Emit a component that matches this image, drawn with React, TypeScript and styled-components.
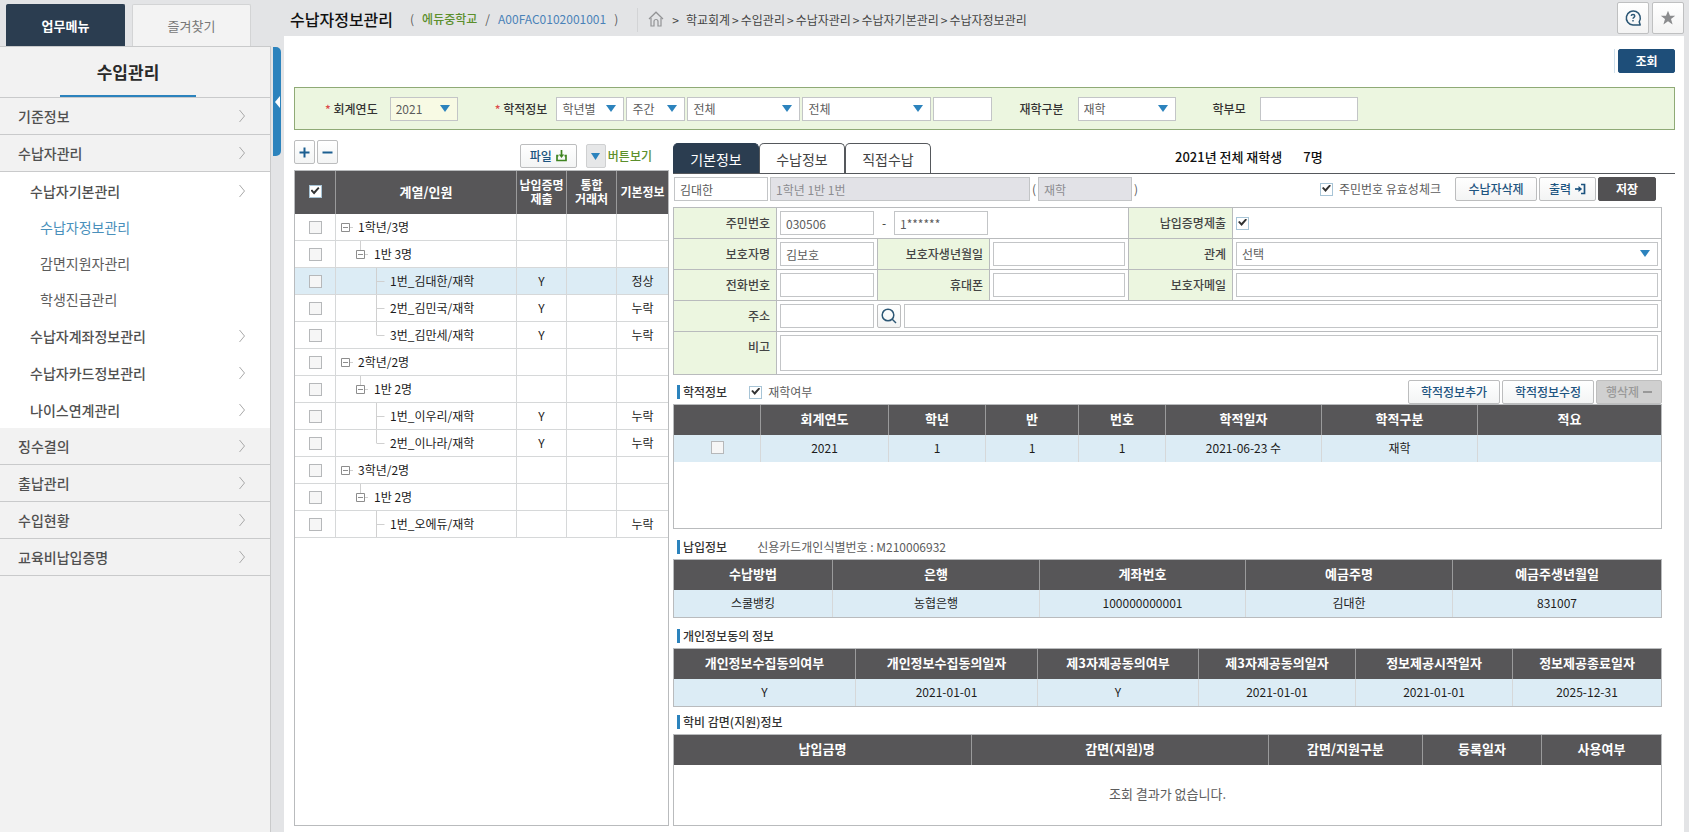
import React, { useState } from "react";
import styled, { createGlobalStyle, css } from "styled-components";

const color = {
  page: "#e3e4e6",
  navy: "#2b3d50",
  blue: "#2c83bd",
  link: "#1d5480",
  line: "#b9bbbd",
  cell: "#d6d8d9",
  head: "#575658",
  mint: "#ecf6e0",
  select: "#dcecf5",
  text: "#333333",
  soft: "#5c5c5c",
};

const GlobalStyle = createGlobalStyle`
  *, *::before, *::after { box-sizing: border-box; }
  body { margin: 0; background: ${color.page}; }
  body, button, input, select, textarea {
    font-family: "Noto Sans CJK KR", "Noto Sans", sans-serif;
    font-size: 12px;
    line-height: 16px;
    color: ${color.text};
  }
  button { cursor: pointer; }
  a { text-decoration: none; color: inherit; }
  ul, h1, h2 { margin: 0; padding: 0; list-style: none; }
`;

/* ---------- page frame ---------- */

const Page = styled.div`
  display: flex;
  min-height: 100vh;
`;

const Sidebar = styled.aside`
  width: 271px;
  flex: none;
  display: flex;
  flex-direction: column;
`;

const SideTabs = styled.div`
  display: flex;
  align-items: flex-end;
  gap: 7px;
  height: 46px;
  padding-left: 6px;
`;

const SideTab = styled.button<{ $active?: boolean }>`
  width: 119px;
  height: 42px;
  padding: 0;
  border: 1px solid ${(p) => (p.$active ? color.navy : "#d3d4d5")};
  border-bottom: 0;
  border-radius: 2px 2px 0 0;
  background: ${(p) => (p.$active ? color.navy : "#f3f3f3")};
  color: ${(p) => (p.$active ? "#fff" : "#777")};
  font-size: 13px;
  font-weight: ${(p) => (p.$active ? 700 : 400)};
`;

const SidePanel = styled.nav`
  flex: 1;
  background: #f2f2f2;
  border: 1px solid #c9cacb;
  border-width: 1px 1px 0 0;
`;

const SideTitle = styled.h2`
  display: flex;
  justify-content: center;
  height: 51px;
  border-bottom: 1px solid #c9cacb;
  font-size: 17px;
  font-weight: 700;
  line-height: 49px;
  color: #2a2a2a;

  span {
    width: 136px;
    margin-left: -14px;
    text-align: center;
    border-bottom: 2px solid ${color.blue};
  }
`;

const MenuItem = styled.a<{ $level: number; $current?: boolean }>`
  display: flex;
  align-items: center;
  justify-content: space-between;
  height: 37px;
  padding: 0 24px 0 18px;
  border-bottom: 1px solid #c9cacb;
  font-size: 14px;
  font-weight: 500;
  color: #505050;

  ${(p) =>
    p.$level === 2 &&
    css`
      padding-left: 30px;
      border-bottom: 0;
    `}
  ${(p) =>
    p.$level === 3 &&
    css`
      height: 36px;
      padding-left: 40px;
      border-bottom: 0;
      font-weight: 400;
      color: ${p.$current ? "#4a90bb" : color.soft};
    `}
`;

const SubMenu = styled.ul`
  background: #fff;
`;

const Rail = styled.div`
  flex: none;
  width: 13px;
  padding: 47px 3px 0 2px;
`;

const CollapseButton = styled.button`
  display: flex;
  align-items: center;
  justify-content: center;
  width: 8px;
  height: 109px;
  padding: 0;
  border: 0;
  border-radius: 0 5px 5px 0;
  background: ${color.blue};
`;

const Main = styled.main`
  flex: 1;
  min-width: 0;
  display: flex;
  flex-direction: column;
  margin-right: 5px;
`;

const Header = styled.header`
  display: flex;
  align-items: flex-start;
  height: 36px;
  padding: 2px 0 0 6px;
`;

const PageTitle = styled.h1`
  font-size: 16px;
  line-height: 34px;
  font-weight: 500;
  color: #111;
`;

const SchoolInfo = styled.div`
  display: flex;
  gap: 8px;
  margin: 0 19px 0 17px;
  line-height: 34px;
  color: ${color.soft};

  b { font-weight: 500; color: #5c8f2c; }
  a { color: #4a82b8; }
`;

const Crumbs = styled.ol`
  display: flex;
  align-items: center;
  height: 24px;
  margin: 6px 0 0;
  padding: 0 0 0 10px;
  list-style: none;
  border-left: 1px solid #d3d4d6;
  color: #444;

  li { display: flex; align-items: center; }
  li + li::before { content: ">"; margin: 0 2px; }
  li:nth-child(2)::before { margin: 0 7px 0 8px; }
`;

const HeaderTools = styled.div`
  display: flex;
  gap: 3px;
  margin-left: auto;
`;

const ToolButton = styled.button`
  display: flex;
  align-items: center;
  justify-content: center;
  width: 32px;
  height: 32px;
  padding: 0;
  border: 1px solid #bfc0c1;
  border-radius: 2px;
  background: linear-gradient(#fff, #f3f3f3);
`;

const Content = styled.div`
  flex: 1;
  display: flex;
  flex-direction: column;
  padding: 13px 9px 6px 10px;
  background: #fff;
`;

/* ---------- controls ---------- */

const Button = styled.button<{ $w: number; $kind?: "primary" | "dark" }>`
  display: inline-flex;
  align-items: center;
  justify-content: center;
  gap: 4px;
  flex: none;
  width: ${(p) => p.$w}px;
  height: 24px;
  padding: 0;
  border: 1px solid #bcbdbe;
  border-radius: 2px;
  background: linear-gradient(#fff, #f3f4f4);
  color: ${color.link};
  font-weight: 500;
  white-space: nowrap;

  ${(p) =>
    p.$kind &&
    css`
      border-color: ${p.$kind === "dark" ? "#525153" : "#1e4e79"};
      background: ${p.$kind === "dark" ? "#525153" : "#1e4e79"};
      color: #fff;
      font-weight: 700;
    `}

  &:disabled {
    border-color: #bfbfbf;
    background: #d0d0d0;
    color: #999;
  }
`;

const MoreButton = styled(Button)`
  border-color: #cfd0d1;
  background: #e6e7e8;
`;

const Field = styled.input<{ $w?: number }>`
  ${(p) => (p.$w ? `flex: none; width: ${p.$w}px;` : "flex: 1; min-width: 0;")}
  height: 24px;
  padding: 0 5px;
  border: 1px solid #c3c5c7;
  border-radius: 0;
  background: #fff;
  color: ${color.soft};

  &:disabled {
    background: #e2e2e7;
    color: #8c8c90;
  }
`;

const Memo = styled.textarea`
  display: block;
  width: 100%;
  height: 36px;
  padding: 4px 5px;
  border: 1px solid #c3c5c7;
  resize: none;
`;

const SelectWrap = styled.span<{ $w?: number; $required?: boolean }>`
  position: relative;
  display: flex;
  ${(p) => (p.$w ? `flex: none; width: ${p.$w}px;` : "flex: 1;")}

  &::after {
    content: "";
    position: absolute;
    top: 8px;
    right: 8px;
    border: 5px solid transparent;
    border-top: 7px solid ${color.blue};
    border-bottom: 0;
    pointer-events: none;
  }

  select {
    appearance: none;
    width: 100%;
    height: 24px;
    padding: 0 20px 0 5px;
    border: 1px solid #c3c5c7;
    border-radius: 0;
    background: ${(p) => (p.$required ? "#f8fae4" : "#fff")};
    color: ${color.soft};
  }
`;

const Check = styled.input.attrs({ type: "checkbox" })`
  appearance: none;
  display: block;
  flex: none;
  width: 13px;
  height: 13px;
  margin: 0;
  border: 1px solid #b6b8ba;
  background: #f6f6f6;

  &:checked {
    border-color: #a7c4d6;
    background: #fff;
  }
  &:checked::after {
    content: "";
    display: block;
    width: 9px;
    height: 8px;
    margin: 1px;
    background: #333;
    clip-path: polygon(0 45%, 18% 30%, 38% 55%, 85% 0, 100% 15%, 40% 95%);
  }
`;

const CheckLabel = styled.label`
  display: inline-flex;
  align-items: center;
  gap: 6px;
  color: ${color.soft};
`;

function Select(props: { label?: string; id?: string; value: string; w?: number; required?: boolean }) {
  return (
    <SelectWrap $w={props.w} $required={props.required}>
      <select id={props.id} aria-label={props.label} defaultValue={props.value}>
        <option>{props.value}</option>
      </select>
    </SelectWrap>
  );
}

/* ---------- search ---------- */

const Actions = styled.div`
  display: flex;
  justify-content: flex-end;
  margin-bottom: 14px;
`;

const ActionGroup = styled.div`
  padding-left: 3px;
  border-left: 1px solid #cfe0ec;
`;

const SearchBar = styled.form`
  display: flex;
  align-items: center;
  height: 43px;
  padding: 1px 0 0 30px;
  border: 1px solid #8faa76;
  background: ${color.mint};
`;

const SearchGroup = styled.div<{ $gap: number; $after: number }>`
  display: flex;
  align-items: center;
  gap: 2px;
  margin-right: ${(p) => p.$after}px;

  label {
    margin-right: ${(p) => p.$gap}px;
    font-weight: 500;
    white-space: nowrap;
  }
  label i { color: #dd4b4b; font-style: normal; }
`;

/* ---------- panels ---------- */

const Columns = styled.div`
  flex: 1;
  display: flex;
  gap: 4px;
  margin-top: 10px;
`;

const TreePanel = styled.section`
  flex: none;
  width: 375px;
  display: flex;
  flex-direction: column;
`;

const TreeTools = styled.div`
  display: flex;
  align-items: flex-start;
  gap: 2px;
  height: 30px;
`;

const TreeActions = styled.div`
  display: flex;
  align-items: center;
  gap: 2px;
  margin: 4px 17px 0 auto;

  button:first-child { margin-right: 7px; }
  label { color: #5c8f2c; font-weight: 500; }
`;

const GridBox = styled.div<{ $minHeight?: number; $grow?: boolean }>`
  ${(p) => p.$grow && "flex: 1;"}
  min-height: ${(p) => p.$minHeight ?? 0}px;
  border: 1px solid ${color.line};
`;

const Grid = styled.table<{ $tree?: boolean }>`
  width: 100%;
  table-layout: fixed;
  border-collapse: separate;
  border-spacing: 0;
  text-align: center;
  color: #1c1c1c;

  th {
    height: ${(p) => (p.$tree ? 43 : 30)}px;
    padding: 0 0 2px;
    border-right: 1px solid #9a9a9b;
    background: ${color.head};
    color: #fff;
    font-size: 13px;
    font-weight: 700;
  }
  td {
    height: 27px;
    padding: 0 0 ${(p) => (p.$tree ? 0 : 2)}px;
    border-right: 1px solid ${color.cell};
    border-bottom: ${(p) => (p.$tree ? `1px solid ${color.cell}` : "0")};
  }
  th:last-child, td:last-child { border-right: 0; }
  th input, td input { margin: 0 auto; }
`;

const Row = styled.tr<{ $selected?: boolean }>`
  background: ${(p) => (p.$selected ? color.select : "#fff")};
`;

const EmptyRow = styled.tr`
  && td {
    height: 60px;
    border: 0;
    color: ${color.soft};
    font-size: 13px;
  }
`;

const SmallHead = styled.span`
  display: block;
  font-size: 12px;
  line-height: 14px;
`;

const Node = styled.div`
  display: flex;
  align-items: center;
  height: 26px;
  padding-left: 4px;
  white-space: nowrap;
`;

const Detail = styled.section`
  flex: 1;
  min-width: 0;
  padding-top: 3px;
`;

const TabRow = styled.div`
  display: flex;
  height: 31px;
  border-bottom: 1px solid #55585c;
`;

const Tab = styled.button<{ $active?: boolean }>`
  width: 86px;
  padding: 0;
  border: 1px solid ${(p) => (p.$active ? color.navy : "#55585c")};
  border-bottom: 0;
  border-radius: 5px 5px 0 0;
  background: ${(p) => (p.$active ? color.navy : "#fff")};
  color: ${(p) => (p.$active ? "#fff" : "#444")};
  font-size: 14px;
`;

const Summary = styled.p`
  display: flex;
  gap: 21px;
  margin: 0;
  padding: 6px 0 0 244px;
  font-size: 13px;
  font-weight: 500;
  color: #111;
`;

const Body = styled.div`
  padding-right: 13px;
`;

const StudentBar = styled.div`
  display: flex;
  align-items: center;
  gap: 2px;
  padding: 3px 6px 6px 1px;
  color: ${color.soft};
`;

const StudentActions = styled.div`
  display: flex;
  align-items: center;
  gap: 2px;
  margin-left: auto;

  label { margin-right: 12px; }
`;

const FormGrid = styled.div`
  display: grid;
  grid-template-columns: 103px 101px 112px 139px 104px 1fr;
  border: 1px solid ${color.line};
  border-bottom: 0;
`;

const FormLabel = styled.label`
  padding: 7px 6px 0 0;
  border: 1px solid ${color.line};
  border-width: 0 1px 1px 0;
  background: ${color.mint};
  text-align: right;
  font-weight: 500;
  color: #444;
`;

const FormCell = styled.div<{ $span?: number; $last?: boolean }>`
  grid-column: span ${(p) => p.$span ?? 1};
  display: flex;
  align-items: center;
  gap: 3px;
  padding: 3px;
  min-height: 31px;
  border-bottom: 1px solid ${color.line};
  border-right: ${(p) => (p.$last ? "0" : `1px solid ${color.line}`)};
`;

const Dash = styled.span`
  width: 14px;
  text-align: center;
`;

const SectionHead = styled.div<{ $top?: number }>`
  display: flex;
  align-items: center;
  height: 24px;
  margin-top: ${(p) => p.$top ?? 6}px;
  padding-left: 4px;

  h2 {
    padding-left: 3px;
    border-left: 3px solid ${color.blue};
    font-size: 12px;
    line-height: 14px;
    font-weight: 500;
  }
  h2 + * { margin-left: 22px; }
`;

const CardNumber = styled.span`
  padding-left: 8px;
  color: ${color.soft};
`;

const SectionActions = styled.div`
  display: flex;
  gap: 2px;
  && { margin-left: auto; }
`;

/* ---------- icons ---------- */

const Chevron = () => (
  <svg width="8" height="14" viewBox="0 0 8 14" fill="none" stroke="#a9a9a9" aria-hidden>
    <path d="M1.5 1 6.5 7 1.5 13" />
  </svg>
);

const HomeIcon = () => (
  <svg width="16" height="16" viewBox="0 0 16 16" fill="none" stroke="#929395" strokeWidth="1.2" aria-hidden>
    <path d="M1 8 8 1.2 15 8" />
    <path d="M3 7v8h3v-4.5a2 2 0 0 1 4 0V15h3V7" />
  </svg>
);

const HelpIcon = () => (
  <svg width="18" height="18" viewBox="0 0 18 18" fill="none" stroke="#2c5775" strokeWidth="1.5" aria-hidden>
    <path d="M15.200 12.800A7 7 0 1 0 9 16h7.200Z" strokeLinejoin="round" />
    <path d="M7.200 6.900C7.300 5 10.800 5 10.800 7c0 1.300-1.800 1.400-1.800 2.800M9 11v1.400" strokeWidth="1.400" />
  </svg>
);

const StarIcon = () => (
  <svg width="16" height="16" viewBox="0 0 16 16" fill="#8b8c8e" aria-hidden>
    <path d="m8 .8 2 5h5.200l-4.200 3.300 1.600 5.400L8 11.300l-4.600 3.200L5 9.100.8 5.800H6Z" />
  </svg>
);

const DownloadIcon = () => (
  <svg width="11" height="12" viewBox="0 0 11 12" fill="none" stroke="#3f8420" strokeWidth="1.7" aria-hidden>
    <path d="M2.500 5.700H1v4.800h9V5.700H8.500" />
    <path d="M5.500 0v5" />
    <path d="M2.800 4.500h5.400L5.500 8Z" fill="#3f8420" stroke="none" />
  </svg>
);

const ExportIcon = () => (
  <svg width="11" height="12" viewBox="0 0 11 12" fill="none" stroke={color.link} strokeWidth="1.7" aria-hidden>
    <path d="M6 1.500h3.500v9H6" />
    <path d="M0 6h4" />
    <path d="M3.500 3 7.200 6 3.500 9Z" fill={color.link} stroke="none" />
  </svg>
);

const SearchIcon = () => (
  <svg width="16" height="16" viewBox="0 0 16 16" fill="none" stroke="#2c5775" strokeWidth="1.500" aria-hidden>
    <circle cx="7" cy="7" r="5.800" />
    <path d="m11 11 4 4" />
  </svg>
);

const Sign = ({ plus }: { plus?: boolean }) => (
  <svg width="11" height="11" viewBox="0 0 11 11" stroke="#1c5f91" strokeWidth="2" aria-hidden>
    <path d={plus ? "M0.500 5.500h10M5.500 0.500v10" : "M0.500 5.500h10"} />
  </svg>
);

const Caret = () => (
  <svg width="9" height="7" viewBox="0 0 9 7" fill={color.blue} aria-hidden>
    <path d="M0 0h9L4.500 7Z" />
  </svg>
);

const BackArrow = () => (
  <svg width="5" height="12" viewBox="0 0 5 12" fill="#fff" aria-hidden>
    <path d="M5 0v12L0 6Z" />
  </svg>
);

/* Connector lines and the collapse box in front of a tree label. */
function Branch({ level, last }: { level: number; last?: boolean }) {
  const width = 2 + level * 16;
  const x = (level - 1) * 15 + 1;
  return (
    <svg width={width} height="26" viewBox={`0 0 ${width} 26`} fill="none" stroke="#d0d0d0" aria-hidden>
      {level === 2 && <path d={`M${x + 4}.5 0v9`} />}
      {level < 3 && <path d={`M${x + 9} 13.500h3`} />}
      {level < 3 && <path d={`M${x}.5 9.500h8v8h-8ZM${x + 2} 13.500h5`} stroke="#8d8d8d" />}
      {level === 3 && <path d={`M36.500 0v${last ? 13 : 26}M36.500 13.500h8`} />}
    </svg>
  );
}

/* ---------- data ---------- */

type Menu = { name: string; level: number; current?: boolean };

const topMenu: Menu[] = [
  { name: "기준정보", level: 1 },
  { name: "수납자관리", level: 1 },
];
const subMenu: Menu[] = [
  { name: "수납자기본관리", level: 2 },
  { name: "수납자정보관리", level: 3, current: true },
  { name: "감면지원자관리", level: 3 },
  { name: "학생진급관리", level: 3 },
  { name: "수납자계좌정보관리", level: 2 },
  { name: "수납자카드정보관리", level: 2 },
  { name: "나이스연계관리", level: 2 },
];
const restMenu: Menu[] = ["징수결의", "출납관리", "수입현황", "교육비납입증명"].map((name) => ({ name, level: 1 }));

const crumbs = ["학교회계", "수입관리", "수납자관리", "수납자기본관리", "수납자정보관리"];

const tree = [
  { level: 1, name: "1학년/3명" },
  { level: 2, name: "1반 3명" },
  { level: 3, name: "1번_김대한/재학", proof: "Y", info: "정상", selected: true },
  { level: 3, name: "2번_김민국/재학", proof: "Y", info: "누락" },
  { level: 3, name: "3번_김만세/재학", proof: "Y", info: "누락", last: true },
  { level: 1, name: "2학년/2명" },
  { level: 2, name: "1반 2명" },
  { level: 3, name: "1번_이우리/재학", proof: "Y", info: "누락" },
  { level: 3, name: "2번_이나라/재학", proof: "Y", info: "누락", last: true },
  { level: 1, name: "3학년/2명" },
  { level: 2, name: "1반 2명" },
  { level: 3, name: "1번_오에듀/재학", proof: "", info: "누락" },
];

/* ---------- pieces ---------- */

function MenuLinks({ items }: { items: Menu[] }) {
  return (
    <>
      {items.map((m) => (
        <li key={m.name}>
          <MenuItem href="#" $level={m.level} $current={m.current}>
            {m.name}
            {m.level < 3 && <Chevron />}
          </MenuItem>
        </li>
      ))}
    </>
  );
}

function DataGrid(props: {
  columns: [React.ReactNode, number][];
  row?: React.ReactNode[];
  minHeight?: number;
}) {
  return (
    <GridBox $minHeight={props.minHeight}>
      <Grid>
        <colgroup>
          {props.columns.map(([, w], i) => (
            <col key={i} width={w} />
          ))}
        </colgroup>
        <thead>
          <tr>
            {props.columns.map(([name], i) => (
              <th key={i} scope="col">{name}</th>
            ))}
          </tr>
        </thead>
        <tbody>
          {props.row ? (
            <Row $selected>
              {props.row.map((v, i) => (
                <td key={i}>{v}</td>
              ))}
            </Row>
          ) : (
            <EmptyRow>
              <td colSpan={props.columns.length}>조회 결과가 없습니다.</td>
            </EmptyRow>
          )}
        </tbody>
      </Grid>
    </GridBox>
  );
}

export default function App() {
  const [tab, setTab] = useState("기본정보");

  return (
    <Page>
      <GlobalStyle />
      <Sidebar>
        <SideTabs>
          <SideTab $active>업무메뉴</SideTab>
          <SideTab>즐겨찾기</SideTab>
        </SideTabs>
        <SidePanel>
          <SideTitle>
            <span>수입관리</span>
          </SideTitle>
          <ul>
            <MenuLinks items={topMenu} />
          </ul>
          <SubMenu>
            <MenuLinks items={subMenu} />
          </SubMenu>
          <ul>
            <MenuLinks items={restMenu} />
          </ul>
        </SidePanel>
      </Sidebar>
      <Rail>
        <CollapseButton aria-label="메뉴 접기">
          <BackArrow />
        </CollapseButton>
      </Rail>

      <Main>
        <Header>
          <PageTitle>수납자정보관리</PageTitle>
          <SchoolInfo>
            <span>(</span>
            <b>에듀중학교</b>
            <span>/</span>
            <a href="#">A00FAC0102001001</a>
            <span>)</span>
          </SchoolInfo>
          <Crumbs>
            <li>
              <a href="#" aria-label="홈"><HomeIcon /></a>
            </li>
            {crumbs.map((c) => (
              <li key={c}>{c}</li>
            ))}
          </Crumbs>
          <HeaderTools>
            <ToolButton aria-label="도움말"><HelpIcon /></ToolButton>
            <ToolButton aria-label="즐겨찾기 추가"><StarIcon /></ToolButton>
          </HeaderTools>
        </Header>

        <Content>
          <Actions>
            <ActionGroup>
              <Button $w={57} $kind="primary">조회</Button>
            </ActionGroup>
          </Actions>

          <SearchBar onSubmit={(e) => e.preventDefault()}>
            <SearchGroup $gap={10} $after={37}>
              <label htmlFor="year"><i>*</i> 회계연도</label>
              <Select id="year" value="2021" w={68} required />
            </SearchGroup>
            <SearchGroup $gap={7} $after={27}>
              <label htmlFor="grade"><i>*</i> 학적정보</label>
              <Select id="grade" value="학년별" w={68} />
              <Select label="주야" value="주간" w={59} />
              <Select label="학년" value="전체" w={113} />
              <Select label="반" value="전체" w={129} />
              <Field aria-label="이름" $w={59} />
            </SearchGroup>
            <SearchGroup $gap={12} $after={37}>
              <label htmlFor="status">재학구분</label>
              <Select id="status" value="재학" w={98} />
            </SearchGroup>
            <SearchGroup $gap={12} $after={0}>
              <label htmlFor="parent">학부모</label>
              <Field id="parent" $w={98} />
            </SearchGroup>
          </SearchBar>

          <Columns>
            <TreePanel>
              <TreeTools>
                <Button $w={21} aria-label="모두 펼치기"><Sign plus /></Button>
                <Button $w={21} aria-label="모두 접기"><Sign /></Button>
                <TreeActions>
                  <Button $w={57}>파일 <DownloadIcon /></Button>
                  <MoreButton $w={20} id="more"><Caret /></MoreButton>
                  <label htmlFor="more">버튼보기</label>
                </TreeActions>
              </TreeTools>
              <GridBox $grow>
                <Grid $tree>
                  <colgroup>
                    <col width={41} />
                    <col width={181} />
                    <col width={50} />
                    <col width={50} />
                    <col width={51} />
                  </colgroup>
                  <thead>
                    <tr>
                      <th scope="col"><Check aria-label="전체 선택" defaultChecked /></th>
                      <th scope="col">계열/인원</th>
                      <th scope="col">
                        <SmallHead>납입증명</SmallHead>
                        <SmallHead>제출</SmallHead>
                      </th>
                      <th scope="col">
                        <SmallHead>통합</SmallHead>
                        <SmallHead>거래처</SmallHead>
                      </th>
                      <th scope="col"><SmallHead>기본정보</SmallHead></th>
                    </tr>
                  </thead>
                  <tbody>
                    {tree.map((r, i) => (
                      <Row key={i} $selected={r.selected}>
                        <td><Check aria-label={r.name} /></td>
                        <td>
                          <Node>
                            <Branch level={r.level} last={r.last} />
                            {r.name}
                          </Node>
                        </td>
                        <td>{r.proof}</td>
                        <td />
                        <td>{r.info}</td>
                      </Row>
                    ))}
                  </tbody>
                </Grid>
              </GridBox>
            </TreePanel>

            <Detail>
              <TabRow>
                {["기본정보", "수납정보", "직접수납"].map((t) => (
                  <Tab key={t} $active={t === tab} onClick={() => setTab(t)}>{t}</Tab>
                ))}
                <Summary>
                  <span>2021년 전체 재학생</span>
                  <span>7명</span>
                </Summary>
              </TabRow>
              <Body>
                <StudentBar>
                  <Field aria-label="성명" $w={94} defaultValue="김대한" />
                  <Field aria-label="학년 반 번호" $w={260} defaultValue="1학년 1반 1번" disabled />
                  <span>(</span>
                  <Field aria-label="학적상태" $w={94} defaultValue="재학" disabled />
                  <span>)</span>
                  <StudentActions>
                    <CheckLabel><Check defaultChecked />주민번호 유효성체크</CheckLabel>
                    <Button $w={82}>수납자삭제</Button>
                    <Button $w={57}>출력 <ExportIcon /></Button>
                    <Button $w={58} $kind="dark">저장</Button>
                  </StudentActions>
                </StudentBar>

                <FormGrid>
                  <FormLabel htmlFor="rrn">주민번호</FormLabel>
                  <FormCell $span={3}>
                    <Field id="rrn" $w={94} defaultValue="030506" />
                    <Dash>-</Dash>
                    <Field aria-label="주민번호 뒷자리" $w={94} defaultValue="1******" />
                  </FormCell>
                  <FormLabel htmlFor="proof">납입증명제출</FormLabel>
                  <FormCell $last><Check id="proof" defaultChecked /></FormCell>

                  <FormLabel htmlFor="guardian">보호자명</FormLabel>
                  <FormCell><Field id="guardian" defaultValue="김보호" /></FormCell>
                  <FormLabel htmlFor="birth">보호자생년월일</FormLabel>
                  <FormCell><Field id="birth" /></FormCell>
                  <FormLabel htmlFor="relation">관계</FormLabel>
                  <FormCell $last><Select id="relation" value="선택" /></FormCell>

                  <FormLabel htmlFor="phone">전화번호</FormLabel>
                  <FormCell><Field id="phone" /></FormCell>
                  <FormLabel htmlFor="mobile">휴대폰</FormLabel>
                  <FormCell><Field id="mobile" /></FormCell>
                  <FormLabel htmlFor="mail">보호자메일</FormLabel>
                  <FormCell $last><Field id="mail" /></FormCell>

                  <FormLabel htmlFor="zip">주소</FormLabel>
                  <FormCell $span={5} $last>
                    <Field id="zip" $w={94} />
                    <Button $w={24} aria-label="주소 찾기"><SearchIcon /></Button>
                    <Field aria-label="상세주소" />
                  </FormCell>

                  <FormLabel htmlFor="memo">비고</FormLabel>
                  <FormCell $span={5} $last><Memo id="memo" /></FormCell>
                </FormGrid>

                <SectionHead $top={5}>
                  <h2>학적정보</h2>
                  <CheckLabel><Check defaultChecked />재학여부</CheckLabel>
                  <SectionActions>
                    <Button $w={92}>학적정보추가</Button>
                    <Button $w={92}>학적정보수정</Button>
                    <Button $w={66} disabled>
                      행삭제
                      <svg width="9" height="2" viewBox="0 0 9 2" aria-hidden><path d="M0 0h9v2H0Z" fill="#999" /></svg>
                    </Button>
                  </SectionActions>
                </SectionHead>
                <DataGrid
                  minHeight={125}
                  columns={[["", 87], ["회계연도", 128], ["학년", 97], ["반", 93], ["번호", 87], ["학적일자", 156], ["학적구분", 156], ["적요", 183]]}
                  row={[<Check aria-label="2021 학적정보 선택" />, "2021", "1", "1", "1", "2021-06-23 수", "재학", ""]}
                />

                <SectionHead>
                  <h2>납입정보</h2>
                  <CardNumber>신용카드개인식별번호 : M210006932</CardNumber>
                </SectionHead>
                <DataGrid
                  columns={[["수납방법", 159], ["은행", 207], ["계좌번호", 206], ["예금주명", 207], ["예금주생년월일", 208]]}
                  row={["스쿨뱅킹", "농협은행", "100000000001", "김대한", "831007"]}
                />

                <SectionHead>
                  <h2>개인정보동의 정보</h2>
                </SectionHead>
                <DataGrid
                  columns={[["개인정보수집동의여부", 182], ["개인정보수집동의일자", 182], ["제3자제공동의여부", 161], ["제3자제공동의일자", 157], ["정보제공시작일자", 157], ["정보제공종료일자", 148]]}
                  row={["Y", "2021-01-01", "Y", "2021-01-01", "2021-01-01", "2025-12-31"]}
                />

                <SectionHead $top={3}>
                  <h2>학비 감면(지원)정보</h2>
                </SectionHead>
                <DataGrid
                  minHeight={91}
                  columns={[["납입금명", 298], ["감면(지원)명", 297], ["감면/지원구분", 154], ["등록일자", 119], ["사용여부", 119]]}
                />
              </Body>
            </Detail>
          </Columns>
        </Content>
      </Main>
    </Page>
  );
}
